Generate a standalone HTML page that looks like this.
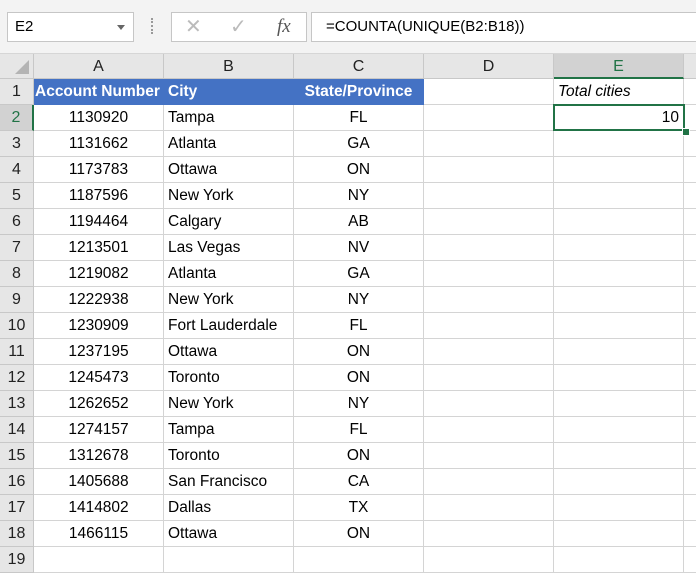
<!DOCTYPE html><html><head><style>
body{margin:0;width:696px;height:551px;overflow:hidden;background:#fff;font-family:"Liberation Sans",sans-serif;position:relative}
.top{position:absolute;left:0;top:0;width:696px;height:53px;background:#f3f3f3;border-bottom:1px solid #d6d6d6}
.box{position:absolute;background:#fff;border:1px solid #c6c6c6;box-sizing:border-box}
.ch{position:absolute;top:54px;height:25px;background:#e6e6e6;border-right:1px solid #c8c8c8;border-bottom:1px solid #c8c8c8;box-sizing:border-box;text-align:center;font-size:16px;line-height:25px;color:#222}
.rh{position:absolute;left:0;width:34px;height:26px;background:#e6e6e6;border-right:1px solid #c8c8c8;border-bottom:1px solid #c8c8c8;box-sizing:border-box;text-align:center;font-size:16px;line-height:26px;color:#222}
.c{position:absolute;height:26px;border-right:1px solid #d4d4d4;border-bottom:1px solid #d4d4d4;box-sizing:border-box;font-size:15.5px;line-height:26px;color:#000;padding:0 4px;white-space:nowrap;overflow:visible}
</style></head><body>
<div class="top"></div>
<div class="box" style="left:7px;top:12px;width:127px;height:30px;font-size:15px;line-height:28px;padding-left:7px">E2<span style="position:absolute;right:8px;top:12px;border-left:4px solid transparent;border-right:4px solid transparent;border-top:5px solid #666"></span></div>
<div style="position:absolute;left:151px;top:18px;width:3px;height:16px;border-left:2px dotted #999"></div>
<div class="box" style="left:171px;top:12px;width:136px;height:30px;color:#bbb;font-size:20px;line-height:28px">
<span style="position:absolute;left:13px">✕</span><span style="position:absolute;left:58px">✓</span><i style="position:absolute;left:105px;color:#555;font-family:'Liberation Serif',serif;font-size:19px">fx</i></div>
<div class="box" style="left:311px;top:12px;width:400px;height:30px;font-size:15px;line-height:28px;padding-left:14px">=COUNTA(UNIQUE(B2:B18))</div>
<div class="ch" style="left:0;width:34px;background:#e6e6e6"><span style="position:absolute;right:4px;bottom:4px;border-left:14px solid transparent;border-bottom:14px solid #b4b4b4"></span></div>
<div class="ch" style="left:34px;width:130px">A</div>
<div class="ch" style="left:164px;width:130px">B</div>
<div class="ch" style="left:294px;width:130px">C</div>
<div class="ch" style="left:424px;width:130px">D</div>
<div class="ch" style="left:554px;width:130px;background:#d2d2d2;color:#217346;border-bottom:2px solid #217346">E</div>
<div class="ch" style="left:684px;width:20px"></div>
<div id="g"></div>
<script>
var d=[["1130920","Tampa","FL"],["1131662","Atlanta","GA"],["1173783","Ottawa","ON"],["1187596","New York","NY"],["1194464","Calgary","AB"],["1213501","Las Vegas","NV"],["1219082","Atlanta","GA"],["1222938","New York","NY"],["1230909","Fort Lauderdale","FL"],["1237195","Ottawa","ON"],["1245473","Toronto","ON"],["1262652","New York","NY"],["1274157","Tampa","FL"],["1312678","Toronto","ON"],["1405688","San Francisco","CA"],["1414802","Dallas","TX"],["1466115","Ottawa","ON"]];
var h="";
for(var r=0;r<19;r++){var y=79+r*26;
h+='<div class="rh" style="top:'+y+'px;'+(r==1?'background:#d2d2d2;color:#217346;border-right:2px solid #217346':'')+'">'+(r+1)+'</div>';
if(r==0){h+='<div class="c" style="left:34px;top:'+y+'px;width:130px;background:#4472c4;color:#fff;font-weight:bold;border-color:#4472c4;padding:0 1px">Account Number</div><div class="c" style="left:164px;top:'+y+'px;width:130px;background:#4472c4;color:#fff;font-weight:bold;border-color:#4472c4">City</div><div class="c" style="left:294px;top:'+y+'px;width:130px;background:#4472c4;color:#fff;font-weight:bold;border-color:#4472c4;text-align:center">State/Province</div>';}
else if(r<18){var e=d[r-1];h+='<div class="c" style="left:34px;top:'+y+'px;width:130px;text-align:center">'+e[0]+'</div><div class="c" style="left:164px;top:'+y+'px;width:130px">'+e[1]+'</div><div class="c" style="left:294px;top:'+y+'px;width:130px;text-align:center">'+e[2]+'</div>';}
else{h+='<div class="c" style="left:34px;top:'+y+'px;width:130px"></div><div class="c" style="left:164px;top:'+y+'px;width:130px"></div><div class="c" style="left:294px;top:'+y+'px;width:130px"></div>';}
h+='<div class="c" style="left:424px;top:'+y+'px;width:130px"></div>';
h+='<div class="c" style="left:554px;top:'+y+'px;width:130px'+(r==0?';font-style:italic':'')+(r==1?';text-align:right':'')+'">'+(r==0?'Total cities':r==1?'10':'')+'</div>';
h+='<div class="c" style="left:684px;top:'+y+'px;width:20px"></div>';}
h+='<div style="position:absolute;left:553px;top:104px;width:132px;height:27px;border:2px solid #217346;box-sizing:border-box"></div><div style="position:absolute;left:682px;top:128px;width:6px;height:6px;background:#217346;border:1px solid #fff"></div>';
document.getElementById("g").innerHTML=h;
</script>
</body></html>
